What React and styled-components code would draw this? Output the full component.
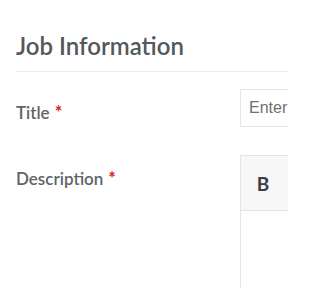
import React from "react";
import styled, { createGlobalStyle } from "styled-components";

const Global = createGlobalStyle`
  html, body { margin: 0; padding: 0; background: #fff; overflow: hidden; }
  body { font-family: Lato, "Open Sans", sans-serif; }
`;

const Page = styled.div`
  box-sizing: border-box;
  width: 288px;
  height: 288px;
  padding-left: 16px;
  overflow: hidden;
`;

const Header = styled.div`
  padding-top: 30px;
  padding-bottom: 9px;
  border-bottom: 1px solid #ececec;
`;

const Heading = styled.h2`
  margin: 0;
  font-family: Lato, "Open Sans", sans-serif;
  font-size: 24px;
  line-height: 32px;
  font-weight: 600;
  color: #53585c;
  white-space: nowrap;
`;

const Form = styled.div`
  display: flex;
  flex-direction: column;
  gap: 28px;
  padding-top: 17px;
`;

const Row = styled.div`
  display: grid;
  grid-template-columns: 224px 1fr;
  align-items: start;
`;

const Label = styled.label`
  padding-top: 13px;
  font-size: 17px;
  line-height: 20px;
  font-weight: 600;
  color: #5f6468;
  white-space: nowrap;
`;

const Required = styled.span`
  color: #e02020;
  margin-left: 5px;
  font-weight: 700;
  font-size: 18px;
`;

const Input = styled.input`
  box-sizing: border-box;
  width: 100%;
  min-width: 0;
  height: 38px;
  padding: 0 0 0 8px;
  border: 1px solid #e4e4e4;
  border-right: none;
  border-radius: 0;
  font-family: "Liberation Sans", Arial, sans-serif;
  font-size: 16px;
  color: #333;
  outline: none;
  &::placeholder { color: #6f6f6f; opacity: 1; }
`;

const Editor = styled.div`
  border: 1px solid #e4e4e4;
  border-right: none;
  border-bottom: none;
  height: 140px;
  display: flex;
  flex-direction: column;
  min-width: 0;
`;

const Toolbar = styled.div`
  height: 54px;
  background: #f7f7f7;
  border-bottom: 1px solid #e4e4e4;
  display: flex;
  align-items: center;
  padding-left: 6px;
`;

const ToolButton = styled.button`
  border: none;
  background: transparent;
  width: 32px;
  height: 32px;
  padding: 0;
  font-family: Lato, "Open Sans", sans-serif;
  font-size: 19px;
  font-weight: 700;
  color: #3a3f44;
  cursor: pointer;
`;

const Content = styled.div`
  flex: 1;
  background: #fff;
`;

export default function App() {
  return (
    <>
      <Global />
      <Page>
        <Header>
          <Heading>Job Information</Heading>
        </Header>
        <Form>
          <Row>
            <Label>
              Title<Required>*</Required>
            </Label>
            <Input placeholder="Enter job title" />
          </Row>
          <Row>
            <Label>
              Description<Required>*</Required>
            </Label>
            <Editor>
              <Toolbar>
                <ToolButton type="button">B</ToolButton>
              </Toolbar>
              <Content />
            </Editor>
          </Row>
        </Form>
      </Page>
    </>
  );
}
